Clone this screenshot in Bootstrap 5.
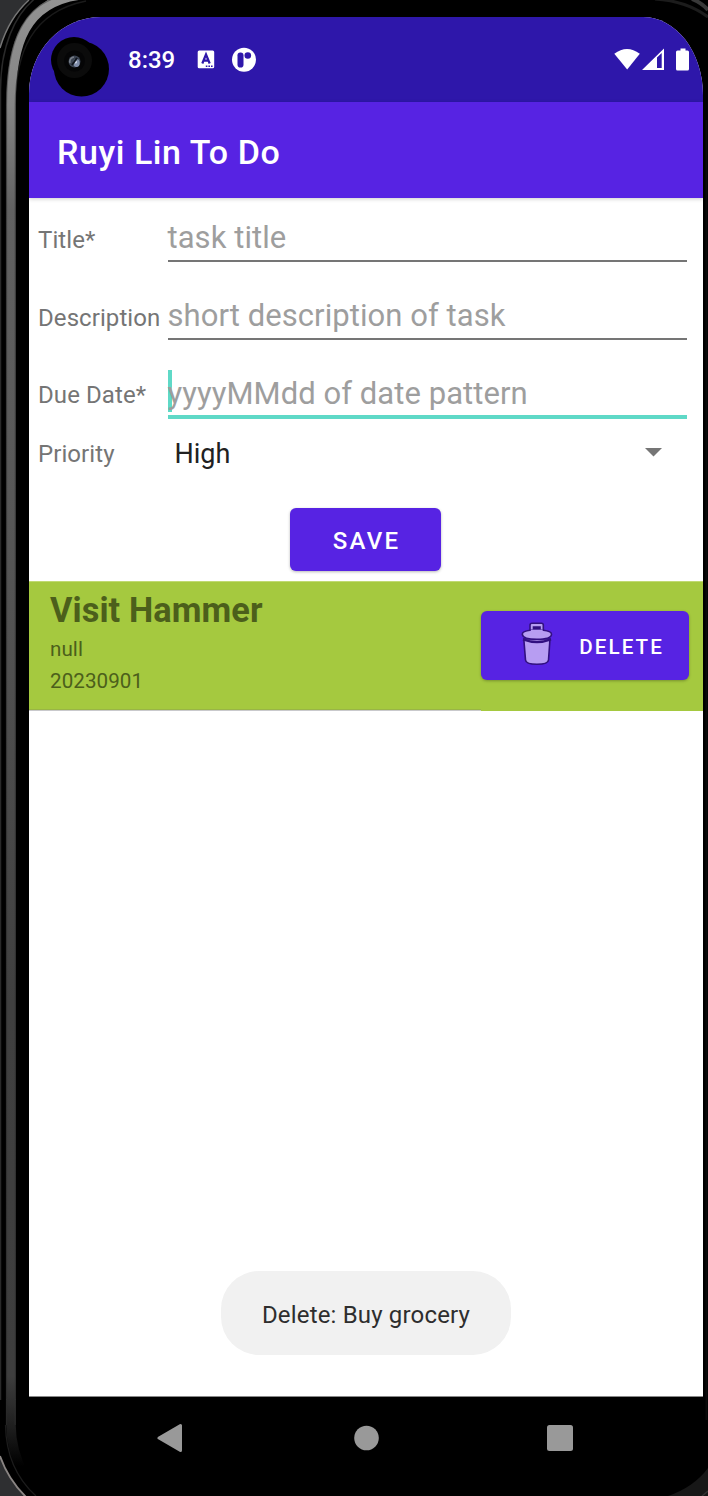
<!DOCTYPE html>
<html lang="en">
<head>
<meta charset="utf-8">
<meta name="viewport" content="width=device-width, initial-scale=1">
<title>Ruyi Lin To Do</title>
<link rel="stylesheet" href="https://cdn.jsdelivr.net/npm/bootstrap@5.3.0/dist/css/bootstrap.min.css">
<style>
body{background:#000;font-family:Roboto,"Liberation Sans",sans-serif;width:708px;height:1496px;overflow:hidden;line-height:1}
.device{height:1496px;padding:17px 5px 0 29px}
.bezel{left:0;top:0;z-index:0}
.screen{height:1380px;background:#fff;border-radius:72px 60px 0 0/76px 78px 0 0;border-bottom:1px solid #888;z-index:1}
.status-bar{height:85px;background:#2e17aa;padding-right:13px;flex:none}
.camera{margin-left:22px;margin-top:14px}
.clock{font-size:24px;font-weight:500;margin-left:17px;padding-top:1px;width:69px}
.app-bar{height:96px;background:#5723e3;padding:4px 28px 0;box-shadow:0 1px 4px rgba(0,0,0,.2);z-index:1;flex:none}
.app-title{font-size:34px;font-weight:500;letter-spacing:.57px}
.field-row{height:77.5px;padding:0 16px 0 9px}
.field-label{width:129.500px;font-size:24px;color:#757575;flex:none;white-space:nowrap;letter-spacing:.08px}
.field-row .field-label{padding-top:30px}
.field-box{height:64px;border-bottom:2px solid #757575;font-size:31px;color:#9e9e9e;padding-bottom:7px;white-space:nowrap;letter-spacing:.06px}
.field-box.focused{height:65.500px;border-bottom:4px solid #5fd9c7;padding-bottom:6px}
.caret{left:0;top:17px;width:4px;height:42px;background:#5fd9c7}
.priority-row{height:45px;padding:2px 41px 0 9px}
.choice{font-size:27px;color:#212121;padding-left:7px}
.btn-app{background:#5723e3;color:#fff;border:0;border-radius:6px;font-weight:500;line-height:1;box-shadow:0 1px 3px rgba(0,0,0,.28)}
.save-btn{width:151px;height:62.500px;font-size:24px;letter-spacing:2.300px;padding:3px 0 0 2px;margin-left:-1px}
.save-area{height:105px;padding-top:32.500px}
.task{height:130px;background:#a5c93f;color:#4c5f1b;padding:0 14px 0 21px;border-top:1px solid #c0da72;flex:none}
.task-line{left:0;bottom:0;width:452px;height:2px;background:linear-gradient(#99b545 50%,#c9c9cc 50%)}
.task-name{font-size:34.3px;font-weight:700;margin-top:11px;letter-spacing:.1px}
.task-info{font-size:20.6px;letter-spacing:.06px}
.delete-btn{width:208px;height:69px;margin-top:29.500px;font-size:20.6px;letter-spacing:2.100px;padding:0 25px 0 39px}
.toast-pill{left:192px;top:1254px;width:290px;height:84px;border-radius:38px;background:#f1f1f1;color:#2e2e2e;font-size:24px;padding-top:3px;letter-spacing:.17px}
.nav-keys{height:99px;padding:0 130px 18px 128px;z-index:1}
</style>
</head>
<body>
<div class="device position-relative">
  <svg class="bezel position-absolute" width="708" height="1496" viewBox="0 0 708 1496" fill="none">
    <defs>
      <linearGradient id="rim" x1="0" y1="0" x2="0" y2="1496" gradientUnits="userSpaceOnUse"><stop offset="0" stop-color="#929292"/><stop offset=".07" stop-color="#858585"/><stop offset=".14" stop-color="#626262"/><stop offset=".35" stop-color="#575757"/><stop offset=".67" stop-color="#404040"/><stop offset=".92" stop-color="#3e3e3e"/><stop offset=".955" stop-color="#1d1d1d"/><stop offset=".98" stop-color="#000"/></linearGradient>
    </defs>
    <path d="M0 0H28Q9 18 0 47Z" fill="#2e2f31"/>
    <path d="M0 1457Q8 1479 26 1496H0Z" fill="#2e2f31"/>
    <path d="M0 48Q9 18 29 0" stroke="#777" stroke-width="1.500"/>
    <path d="M.500 1400V90C.500 48 14 14 37-3" stroke="#292929" stroke-width="1.500"/>
    <path d="M11 1400V105C11 42 26 2 80-5" stroke="url(#rim)" stroke-width="9.500"/>
    <path d="M11 1399V1425C11 1445 16 1460 24 1475" stroke="url(#rim)" stroke-width="9.500"/>
    <path d="M6.500 1425V105C6.500 42 23 5 62-4M15.300 1425V108C15 52 32 12 86 1" stroke="#333" stroke-opacity=".5" stroke-width="1.300"/>
    <path d="M0 1456Q8 1479 26 1497" stroke="#8a8583" stroke-width="1.800"/>
    <path d="M5.500 1425C6 1455 16 1478 36 1496" stroke="#1c1c1c" stroke-width="1.300"/>
    <path d="M655-1Q687 1 708 17" stroke="#1c1c1c" stroke-width="3"/>
    <path d="M692-1Q702 3 708 10" stroke="#393939" stroke-width="4"/>
    <path d="M668 1496Q694 1487 708 1468V1496Z" fill="#171717"/>
    <path d="M702 1496L708 1491" stroke="#333" stroke-width="1.500"/>
    <path d="M706.500 120V1420" stroke="#0b0b0b" stroke-width="2"/>
  </svg>

  <div class="screen position-relative d-flex flex-column overflow-hidden">
    <div class="status-bar d-flex align-items-center text-white">
      <svg class="camera" width="60" height="62" viewBox="51 36 60 62">
        <circle cx="74" cy="60" r="23" fill="#000"/><circle cx="81.5" cy="69" r="27.5" fill="#000"/>
        <circle cx="74.5" cy="60.500" r="17.500" fill="#0b0b0b"/><circle cx="74.500" cy="61" r="10.500" fill="#050506"/>
        <circle cx="74.500" cy="61.500" r="6" fill="#3b4351"/>
        <ellipse cx="76.500" cy="63" rx="3.200" ry="4" fill="#7f8ca8"/><circle cx="75.500" cy="62" r="1.500" fill="#d2daea"/>
        <path d="M70 63Q69 58 74 57" stroke="#777d88" stroke-width="1.500" fill="none"/><path d="M72 65L77 58" stroke="#11151e" stroke-width="2"/>
      </svg>
      <span class="clock">8:39</span>
      <svg width="60" height="26" viewBox="197 47 60 26">
        <rect x="197.700" y="50.500" width="16.500" height="17.700" rx="1.500" fill="#fff"/>
        <path d="M202.300 63.500L206 54.500L209.700 63.500M203.500 60.700H208.500" fill="none" stroke="#2e17aa" stroke-width="2.200"/>
        <path d="M205.800 66.200H213" stroke="#2e17aa" stroke-width="1.500" stroke-dasharray="1.600 1"/>
        <circle cx="244" cy="59.700" r="12" fill="#fff"/>
        <rect x="237.500" y="52.500" width="6" height="15" rx="2.800" fill="#2e17aa"/><circle cx="247.800" cy="55.500" r="3.300" fill="#2e17aa"/>
      </svg>
      <svg class="ms-auto" width="77" height="26" viewBox="613 47 77 26" fill="#fff">
        <path d="M614.300 53.800Q627 44 639.800 53.800L627.200 69.500Z"/>
        <path fill-rule="evenodd" d="M642 70L664 48.500V70ZM657 57.500V68H661.700V53Z"/>
        <path d="M680.500 48.500h5v2h2q1.500 0 1.500 1.500v17q0 1.500-1.500 1.500h-10q-1.500 0-1.500-1.500v-17q0-1.500 1.500-1.500h3z"/>
      </svg>
    </div>
    <header class="app-bar d-flex align-items-center text-white position-relative"><span class="app-title">Ruyi Lin To Do</span></header>

    <main>
      <div class="field-row d-flex">
        <div class="field-label">Title*</div>
        <div class="field-box flex-fill d-flex align-items-end">task title</div>
      </div>
      <div class="field-row d-flex">
        <div class="field-label">Description</div>
        <div class="field-box flex-fill d-flex align-items-end">short description of task</div>
      </div>
      <div class="field-row d-flex">
        <div class="field-label">Due Date*</div>
        <div class="field-box focused flex-fill d-flex align-items-end position-relative"><span class="caret position-absolute"></span><span class="position-relative">yyyyMMdd of date pattern</span></div>
      </div>
      <div class="priority-row d-flex align-items-center">
        <div class="field-label">Priority</div>
        <div class="choice">High</div>
        <svg class="ms-auto mb-1" width="17" height="9" viewBox="0 0 17 9"><path d="M0 0H17L8.500 8.500Z" fill="#757575"/></svg>
      </div>
      <div class="save-area text-center"><button class="btn btn-app save-btn" type="button">SAVE</button></div>
    </main>

    <section class="task d-flex justify-content-between position-relative">
      <div>
        <div class="task-name">Visit Hammer</div>
        <div class="task-info mt-2 pt-1">null</div>
        <div class="task-info mt-2 pt-1">20230901</div>
      </div>
      <button class="btn btn-app delete-btn d-flex align-items-center justify-content-between" type="button">
        <svg class="mb-1" width="34" height="46" viewBox="520 622 34 46" fill="#b79df2" stroke="#321080" stroke-width="1.600">
          <path d="M523.800 640L525.500 661Q525.800 665.300 537 665.300T548.500 661L550 640Z"/>
          <path d="M523 640.300Q537 645.500 551 640.300" fill="none" stroke-width="2.500"/>
          <path d="M530 631.500V626Q530 624.300 532 624.300H541.500Q543.300 624.300 543.300 626V631.500Z"/>
          <path d="M530 631.200H543.500Q551.500 632 551.500 635.200Q551.500 640.200 537 640.200T522.300 635.200Q522.300 632 530 631.200Z"/>
          <path d="M533.500 628H540V630.700H533.500Z" fill="#321080"/><path d="M530.800 631.500H542.700" stroke="#b79df2"/>
        </svg>
        <span class="pt-1">DELETE</span>
      </button>
      <span class="task-line position-absolute"></span>
    </section>

    <div class="toast-pill position-absolute d-flex align-items-center justify-content-center">Delete: Buy grocery</div>
  </div>

  <nav class="nav-keys position-relative d-flex align-items-center justify-content-between">
    <svg width="26" height="30" viewBox="0 0 26 30"><path d="M2 15L23.500 2.500V27.500Z" fill="#999" stroke="#999" stroke-width="3" stroke-linejoin="round"/></svg>
    <svg class="ms-1" width="26" height="26" viewBox="0 0 26 26"><circle cx="12.500" cy="13" r="12.300" fill="#999"/></svg>
    <svg width="26" height="26" viewBox="0 0 26 26"><rect width="26" height="26" rx="2.500" fill="#999"/></svg>
  </nav>
</div>
<script src="https://cdn.jsdelivr.net/npm/bootstrap@5.3.0/dist/js/bootstrap.bundle.min.js"></script>
</body>
</html>
